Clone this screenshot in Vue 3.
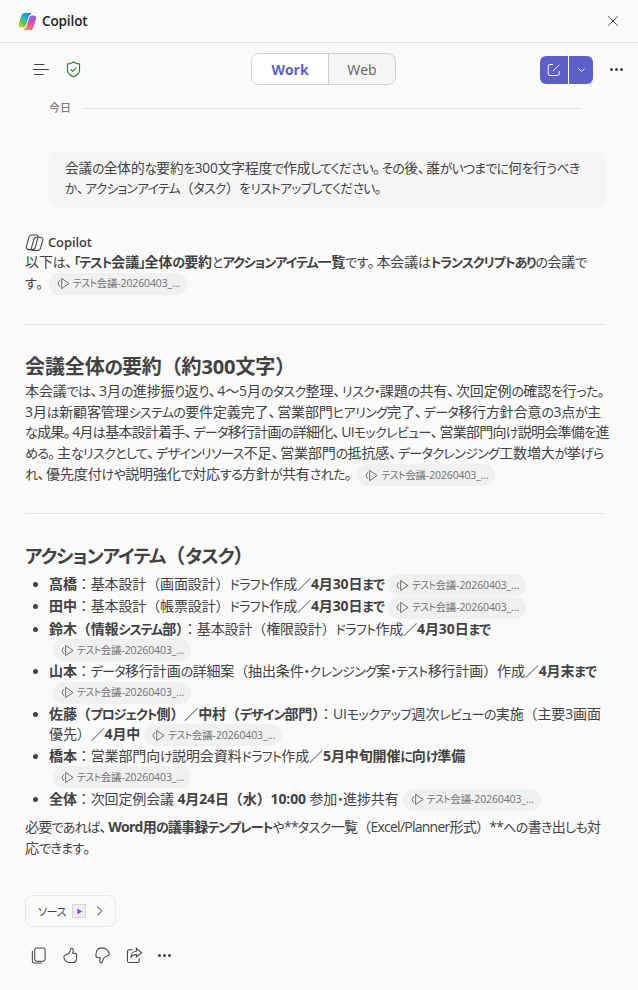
<template>
  <div class="pane">
    <!-- Title bar -->
    <header class="titlebar">
      <div class="brand">
        <svg class="logo" viewBox="0 0 20 20">
          <defs>
            <linearGradient id="logoA" x1="0.8" y1="0" x2="0.1" y2="1">
              <stop offset="0" stop-color="#1f7fe8" />
              <stop offset="0.4" stop-color="#22b8c8" />
              <stop offset="0.7" stop-color="#6cc644" />
              <stop offset="1" stop-color="#f5c92e" />
            </linearGradient>
            <linearGradient id="logoB" x1="0.7" y1="0" x2="0.2" y2="1">
              <stop offset="0" stop-color="#8e5be8" />
              <stop offset="0.5" stop-color="#e54fa8" />
              <stop offset="1" stop-color="#fb8a3c" />
            </linearGradient>
          </defs>
          <path d="M6.800 1h6c1.200 0 1.600.6 1.300 1.200-1.500.3-2.500 1.400-3 3l-2.400 8c-.6 1.900-1.600 3-3.200 3H3.200C1.200 16.200.2 14.600.8 12.600l2.800-9C4.100 2 5.200 1 6.800 1z" fill="url(#logoA)" />
          <path d="M13.200 19H7.400c-1.200 0-1.700-.6-1.300-1.200 1.500-.3 2.500-1.400 3-3l2.400-8c.6-1.900 1.600-3 3.200-3h1.600c2 0 3.200 1.500 2.600 3.500l-2.800 9c-.5 1.700-1.500 2.700-2.900 2.700z" fill="url(#logoB)" />
        </svg>
        <span class="brand-name">Copilot</span>
      </div>
      <svg class="close" viewBox="0 0 14 14">
        <path d="M1.500 1.500l11 11M12.500 1.500l-11 11" />
      </svg>
    </header>

    <!-- Toolbar -->
    <div class="toolbar">
      <div class="tools-left">
        <svg class="menu-icon" viewBox="0 0 16 12">
          <path d="M1 .5h10.500M0 5.500h16M1 10.500h9.500" />
        </svg>
        <svg class="shield" viewBox="0 0 16 18">
          <path d="M8 1c1.900 1.400 3.900 2.100 6.500 2.200v6c0 3.400-2.300 5.900-6.500 7.600-4.200-1.700-6.500-4.200-6.500-7.600v-6C4.100 3.100 6.100 2.400 8 1z" />
          <path d="M5 9l2.200 2L11 7" />
        </svg>
      </div>
      <div class="switch">
        <span class="switch-item active">Work</span>
        <span class="switch-item">Web</span>
      </div>
      <div class="tools-right">
        <div class="new-chat">
          <span class="new-main">
            <svg viewBox="0 0 14 14">
              <path d="M6 1.500H3A1.800 1.800 0 0 0 1.200 3.300v7.400A1.800 1.800 0 0 0 3 12.500h7.400a1.800 1.800 0 0 0 1.800-1.800V8" />
              <path d="M6 8.200l6.300-6.600" />
            </svg>
          </span>
          <span class="new-drop">
            <svg viewBox="0 0 10 6"><path d="M1.500 1.500L5 4.500l3.500-3" /></svg>
          </span>
        </div>
        <span class="dots"><i></i><i></i><i></i></span>
      </div>
    </div>

    <!-- Date -->
    <div class="date-row">
      <span class="date">今日</span>
      <span class="date-line"></span>
    </div>

    <!-- User prompt -->
    <div class="prompt" v-html="fmt(prompt)"></div>

    <!-- Answer -->
    <section class="answer">
      <div class="answer-head">
        <svg class="mono-logo" viewBox="0 0 20 20">
          <path d="M6.800 2h5.400c1.100 0 1.900.9 1.600 2l-2.800 10.500c-.5 1.900-1.600 3-3.200 3H4C2 17.500 1 15.800 1.500 14L4.200 4.400C4.600 3 5.500 2 6.800 2z" />
          <path d="M13.800 4.500h2.400c2 0 3 1.600 2.500 3.400l-2.500 8.400c-.4 1.400-1.400 2.200-2.700 2.200H8.200c-1.200 0-1.900-.9-1.600-2L9.400 6.600c.4-1.300 1.300-2.100 2.400-2.100z" />
        </svg>
        <span>Copilot</span>
      </div>
      <p class="body">
        <span v-html="fmt(intro)"></span><span class="cite"><svg viewBox="0 0 14 14"><path d="M3 3.500L1 7l2 3.500M5 1.500v11L13 7z" /></svg><span v-html="citeLabel"></span></span>
      </p>

      <hr class="rule first" />

      <h2 v-html="fmt('会議全体の要約（約300文字）')"></h2>
      <p class="body">
        <span v-html="fmt(summary)"></span><span class="cite"><svg viewBox="0 0 14 14"><path d="M3 3.500L1 7l2 3.500M5 1.500v11L13 7z" /></svg><span v-html="citeLabel"></span></span>
      </p>

      <hr class="rule second" />

      <h2 v-html="fmt('アクションアイテム（タスク）')"></h2>
      <ul class="tasks">
        <li v-for="(task, i) in tasks" :key="i">
          <span v-html="fmt(task.html)"></span><br v-if="task.wrap" /><span class="cite"><svg viewBox="0 0 14 14"><path d="M3 3.500L1 7l2 3.500M5 1.500v11L13 7z" /></svg><span v-html="citeLabel"></span></span>
        </li>
      </ul>
      <p class="body closing" v-html="fmt(closing)"></p>
    </section>

    <!-- Sources -->
    <div class="source">
      <span v-html="fmt('ソース')"></span>
      <span class="video-thumb"><svg viewBox="0 0 10 10"><path d="M2 1l7 4-7 4z" /></svg></span>
      <svg class="chev" viewBox="0 0 8 14"><path d="M1.500 2l5 5-5 5" /></svg>
    </div>

    <!-- Actions -->
    <div class="actions">
      <svg viewBox="0 0 16 18">
        <rect x="4" y="1" width="11" height="14" rx="2" />
        <path d="M1.500 4v10.500A2.500 2.500 0 0 0 4 17h8" />
      </svg>
      <svg viewBox="0 0 18 18">
        <path d="M2 10.500c0-1.300.9-2 2.300-2.300 2-.5 4.200-2.500 4.700-5.500.2-1.200 1-1.700 1.800-1.400 1 .4 1.300 1.500 1 3.100l-.5 2.300h2.200c1.600 0 2.400 1 2.200 2.400l-.7 4.800c-.3 1.700-1.300 2.600-3 2.600H7c-1.400 0-2.300-.8-3.300-1.700C2.700 13.400 2 12 2 10.500z" />
      </svg>
      <svg viewBox="0 0 18 18">
        <path d="M16 7.500c0 1.300-.9 2-2.300 2.300-2 .5-4.200 2.500-4.700 5.500-.2 1.200-1 1.700-1.800 1.400-1-.4-1.300-1.500-1-3.100l.5-2.300H4.500C2.900 11.300 2 10.300 2 8.900c0-1.800.6-4.300 1.400-5.700.7-1.200 1.700-2 3-2h4c1.400 0 2.300.8 3.300 1.700 1.300 1.200 2.300 2.800 2.300 4.600z" />
      </svg>
      <svg viewBox="0 0 18 18">
        <path d="M7 3H3.500A2 2 0 0 0 1.500 5v9.500a2 2 0 0 0 2 2H12a2 2 0 0 0 2-2V12" />
        <path d="M11 1.500L16.500 6 11 10.500V8c-2.800 0-4.800 1-6 3.500C5.300 8 7.500 4.500 11 4.200z" />
      </svg>
      <span class="dots"><i></i><i></i><i></i></span>
    </div>
  </div>
</template>

<script setup>
// The kana in the reference are much narrower than the kanji, so they get their own span
const fmt = (text) => text
  .replace(/[ぁ-んァ-ヶー・「」]+/g, (run) => `<span class="k">${run}</span>`)
  .replace(/[、。]/g, (mark) => `<span class="p">${mark}</span>`)

const citeLabel = fmt('テスト会議-20260403_...')

const prompt = '会議の全体的な要約を300文字程度で作成してください。その後、誰がいつまでに何を行うべき<br>か、アクションアイテム（タスク）をリストアップしてください。'

const intro = '以下は、<b>「テスト会議」全体の要約</b>と<b>アクションアイテム一覧</b>です。本会議は<b>トランスクリプトあり</b>の会議で<br>す。'

const summary = [
  '本会議では、3月の進捗振り返り、4〜5月のタスク整理、リスク・課題の共有、次回定例の確認を行った。',
  '3月は新顧客管理システムの要件定義完了、営業部門ヒアリング完了、データ移行方針合意の3点が主',
  '<span class="tight">な成果。4月は基本設計着手、データ移行計画の詳細化、UIモックレビュー、営業部門向け説明会準備を進</span>',
  'める。主なリスクとして、デザインリソース不足、営業部門の抵抗感、データクレンジング工数増大が挙げら',
  'れ、優先度付けや説明強化で対応する方針が共有された。',
].join('<br>')

const closing = '<span class="tight">必要であれば、<b>Word用の議事録テンプレート</b>や**タスク一覧（Excel/Planner形式）**への書き出しも対</span><br>応できます。'

const tasks = [
  { html: '<b>高橋</b>：基本設計（画面設計）ドラフト作成／<b>4月30日まで</b>' },
  { html: '<b>田中</b>：基本設計（帳票設計）ドラフト作成／<b>4月30日まで</b>' },
  { html: '<b>鈴木（情報システム部）</b>：基本設計（権限設計）ドラフト作成／<b>4月30日まで</b>', wrap: true },
  { html: '<b>山本</b>：データ移行計画の詳細案（抽出条件・クレンジング案・テスト移行計画）作成／<b>4月末まで</b>', wrap: true },
  { html: '<b>佐藤（プロジェクト側）／中村（デザイン部門）</b>：UIモックアップ週次レビューの実施（主要3画面<br>優先）／<b>4月中</b>' },
  { html: '<b>橋本</b>：営業部門向け説明会資料ドラフト作成／<b>5月中旬開催に向け準備</b>', wrap: true },
  { html: '<b>全体</b>：次回定例会議 <b>4月24日（水）10:00</b> 参加・進捗共有' },
]
</script>

<style>
html,
body {
  margin: 0;
  background: #fafafa;
}
</style>

<style scoped>
.pane {
  width: 638px;
  height: 990px;
  overflow: hidden;
  background: #fafafa;
  color: #424242;
  font-family: "Open Sans", "Noto Sans CJK JP", sans-serif;
  font-size: 14px;
  letter-spacing: -0.12px;
}

:deep(.k) {
  font-size: 0.93em;
  font-feature-settings: "palt";
  letter-spacing: -0.05em;
}

:deep(b .k) {
  letter-spacing: -0.08em;
}

:deep(.p) {
  letter-spacing: -0.38em;
}

:deep(b) {
  font-weight: 700;
}

:deep(.tight) {
  letter-spacing: -0.75px;
}

.titlebar {
  height: 42px;
  border-bottom: 1px solid #e0e0e0;
  padding: 0 19px 0 18px;
  display: flex;
  align-items: center;
  justify-content: space-between;
}

.brand {
  display: flex;
  align-items: center;
  gap: 5px;
}

.logo {
  width: 19px;
  height: 19px;
}

.brand-name {
  font-size: 13.500px;
  font-weight: 600;
  color: #242424;
}

.close {
  width: 12px;
  height: 12px;
  fill: none;
  stroke: #424242;
  stroke-width: 1.100;
}

.toolbar {
  height: 53px;
  padding: 0 15px 0 33px;
  display: flex;
  align-items: center;
  position: relative;
  justify-content: space-between;
}

.tools-left {
  display: flex;
  align-items: center;
  gap: 17px;
}

.menu-icon {
  width: 16px;
  height: 12px;
  fill: none;
  stroke: #424242;
  stroke-width: 1;
}

.shield {
  width: 15px;
  height: 17px;
  fill: none;
  stroke: #107c10;
  stroke-width: 1.100;
}

.switch {
  position: absolute;
  left: 251px;
  top: 10px;
  display: flex;
  width: 145px;
  height: 32px;
  box-sizing: border-box;
  border: 1px solid #d1d1d1;
  border-radius: 8px;
  overflow: hidden;
  background: #f5f5f5;
}

.switch-item {
  flex: 1;
  display: flex;
  align-items: center;
  justify-content: center;
  font-size: 14px;
  letter-spacing: 0;
  color: #616161;
}

.switch-item.active {
  flex: 0 0 76px;
  background: #fff;
  color: #5b5fc7;
  font-weight: 700;
  border-right: 1px solid #d1d1d1;
}

.tools-right {
  display: flex;
  align-items: center;
  gap: 17px;
}

.new-chat {
  display: flex;
  height: 28px;
  border-radius: 6px;
  overflow: hidden;
  gap: 1px;
  background: #fff;
}

.new-main,
.new-drop {
  display: flex;
  align-items: center;
  justify-content: center;
  background: #5b5fc7;
}

.new-main {
  width: 28px;
}

.new-main svg {
  width: 14px;
  height: 14px;
  fill: none;
  stroke: #fff;
  stroke-width: 1;
}

.new-drop {
  width: 24px;
}

.new-drop svg {
  width: 9px;
  height: 6px;
  fill: none;
  stroke: #fff;
  stroke-width: 1;
}

.dots {
  display: inline-flex;
  gap: 2px;
}

.dots i {
  width: 3px;
  height: 3px;
  border-radius: 50%;
  background: #424242;
}

.date-row {
  height: 20px;
  margin: 2px 57px 0 49px;
  display: flex;
  align-items: center;
  gap: 11px;
}

.date {
  font-size: 11px;
  color: #616161;
  margin-bottom: 3px;
}

.date-line {
  flex: 1;
  height: 1px;
  background: #e0e0e0;
}

.prompt {
  box-sizing: border-box;
  height: 57px;
  margin: 33px 32px 0 48px;
  padding: 7px 17px 0;
  background: #f5f5f5;
  border-radius: 10px;
  font-size: 13.700px;
  line-height: 20px;
  white-space: nowrap;
}

.answer {
  margin: 24px 33px 0 25px;
}

.answer-head {
  display: flex;
  align-items: center;
  gap: 4px;
  height: 20px;
  font-weight: 600;
  font-size: 13px;
}

.mono-logo {
  width: 19px;
  height: 19px;
  fill: none;
  stroke: #424242;
  stroke-width: 1.100;
}

.body {
  margin: 0;
  line-height: 20.700px;
  white-space: nowrap;
}

.cite {
  display: inline-flex;
  align-items: center;
  vertical-align: middle;
  gap: 3px;
  box-sizing: border-box;
  width: 138px;
  height: 22px;
  margin-left: 4px;
  padding-left: 8px;
  border-radius: 11px;
  background: #f0f0f0;
  color: #707070;
  font-size: 10.500px;
  font-weight: 400;
  line-height: 22px;
}

.cite svg {
  width: 13px;
  height: 13px;
  fill: none;
  stroke: #616161;
  stroke-width: 1;
}

.rule {
  border: 0;
  height: 1px;
  background: #e0e0e0;
  margin: 0;
}

.rule.first {
  margin-top: 29px;
}

.rule.second {
  margin-top: 27px;
}

h2 {
  margin: 28px 0 0;
  font-size: 20px;
  line-height: 28px;
  font-weight: 700;
}

.tasks {
  margin: 4px 0 0;
  padding: 0 0 0 24px;
  white-space: nowrap;
}

.tasks li {
  line-height: 20px;
  margin-bottom: 0.200px;
}

.tasks li::marker {
  font-size: 13px;
}

.closing {
  margin-top: 6px;
}

.source {
  margin: 37px 0 0 25px;
  width: 91px;
  height: 32px;
  box-sizing: border-box;
  border: 1px solid #e6e6e6;
  border-radius: 8px;
  padding-left: 12px;
  display: flex;
  align-items: center;
  font-size: 12px;
}

.video-thumb {
  display: flex;
  align-items: center;
  justify-content: center;
  width: 12px;
  height: 12px;
  margin-left: 6px;
  background: #eee;
  border: 1px solid #d6d6d6;
}

.video-thumb svg {
  width: 7px;
  height: 7px;
  fill: #8a3ffc;
}

.chev {
  width: 7px;
  height: 12px;
  margin-left: 10px;
  fill: none;
  stroke: #616161;
  stroke-width: 1.200;
}

.actions {
  margin: 19.500px 0 0 30px;
  display: flex;
  align-items: center;
  gap: 15px;
}

.actions svg {
  width: 17px;
  height: 17px;
  fill: none;
  stroke: #424242;
  stroke-width: 1.100;
}
</style>
